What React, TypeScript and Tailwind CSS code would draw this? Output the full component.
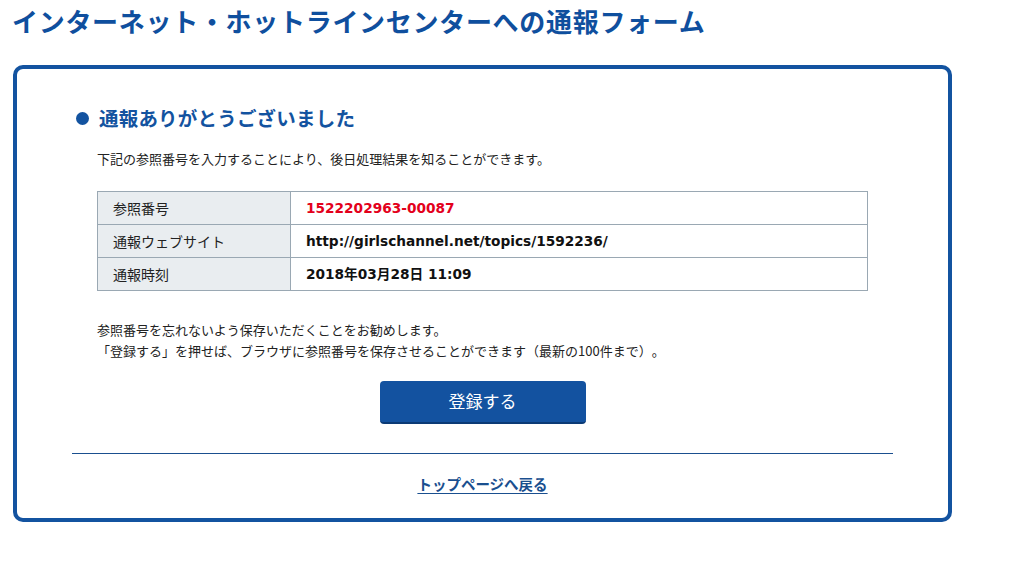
const jp = "font-['Noto_Sans_CJK_JP',sans-serif] [text-spacing-trim:space-all]";
const val = "font-['DejaVu_Sans','Noto_Sans_CJK_JP',sans-serif]";

const rows = [
  { label: "参照番号", value: "1522202963-00087", red: true },
  { label: "通報ウェブサイト", value: "http://girlschannel.net/topics/1592236/" },
  { label: "通報時刻", value: "2018年03月28日 11:09" },
];

export default function App() {
  return (
    <div className={`w-[1012px] h-[581px] bg-white overflow-hidden ${jp}`}>
      <h1 className="pl-[12px] text-[26px] leading-[42px] font-bold text-[#0f4f9e] tracking-[0.7px]">
        インターネット・ホットラインセンターへの通報フォーム
      </h1>

      <div className="mt-[23px] ml-[13px] w-[939px] h-[457px] border-4 border-[#1353a0] rounded-[10px]">
        <div className="pt-[35px] pl-[59px] flex items-center gap-[10px]">
          <span className="w-[13px] h-[13px] rounded-full bg-[#1353a0]" />
          <h2 className="text-[19.5px] leading-[28px] font-bold text-[#1353a0] tracking-[0.2px]">
            通報ありがとうございました
          </h2>
        </div>

        <div className="px-[80px]">
          <p className="mt-[17px] text-[13px] leading-[20px] text-[#222]">
            下記の参照番号を入力することにより、後日処理結果を知ることができます。
          </p>

          <div className="mt-[22px] grid grid-cols-[193px_1fr] border-t border-l border-[#9aa8b3]">
            {rows.map((r) => (
              <div key={r.label} className="contents">
                <div className="h-[33px] flex items-center pl-[15px] bg-[#e9edf0] border-r border-b border-[#9aa8b3] text-[14px] text-[#222]">
                  {r.label}
                </div>
                <div
                  className={`h-[33px] flex items-center pl-[15px] border-r border-b border-[#9aa8b3] text-[13.7px] font-bold ${val} ${
                    r.red ? "text-[#e3001b]" : "text-[#111]"
                  }`}
                >
                  {r.value}
                </div>
              </div>
            ))}
          </div>

          <div className="mt-[28px] text-[13px] leading-[21px] text-[#222]">
            <p>参照番号を忘れないよう保存いただくことをお勧めします。</p>
            <p>「登録する」を押せば、ブラウザに参照番号を保存させることができます（最新の100件まで）。</p>
          </div>
        </div>

        <div className="mt-[20px] flex justify-center">
          <button className="w-[206px] h-[43px] pb-[3px] rounded-[4px] bg-[#1352a0] border-b-2 border-[#0b3a75] text-white text-[17px] leading-none">
            登録する
          </button>
        </div>

        <div className="mt-[29px] mx-[55px] border-t border-[#1a4f8f]" />

        <div className="mt-[20px] flex justify-center">
          <a href="#" className="text-[14.5px] leading-[20px] font-bold text-[#1a4f8f] underline underline-offset-[3px]">
            トップページへ戻る
          </a>
        </div>
      </div>
    </div>
  );
}
